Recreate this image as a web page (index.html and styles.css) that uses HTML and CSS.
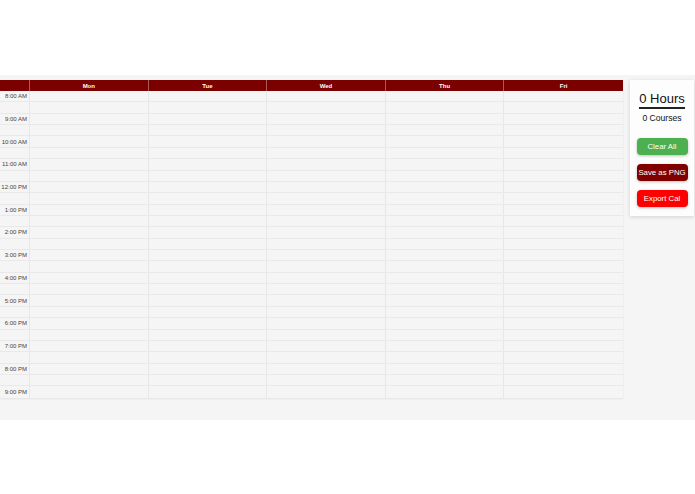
FILE: index.html
```html
<!DOCTYPE html>
<html>
<head>
<meta charset="utf-8">
<link rel="stylesheet" href="styles.css">
</head>
<body>
<div class="top"></div>
<main class="band">
  <section class="cal">
    <div class="row head">
      <div class="c t"></div><div class="c">Mon</div><div class="c">Tue</div><div class="c">Wed</div><div class="c">Thu</div><div class="c">Fri</div>
    </div>
    <div class="row"><div class="c t">8:00 AM</div><div class="c"></div><div class="c"></div><div class="c"></div><div class="c"></div><div class="c"></div></div>
    <div class="row"><div class="c t"></div><div class="c"></div><div class="c"></div><div class="c"></div><div class="c"></div><div class="c"></div></div>
    <div class="row"><div class="c t">9:00 AM</div><div class="c"></div><div class="c"></div><div class="c"></div><div class="c"></div><div class="c"></div></div>
    <div class="row"><div class="c t"></div><div class="c"></div><div class="c"></div><div class="c"></div><div class="c"></div><div class="c"></div></div>
    <div class="row"><div class="c t">10:00 AM</div><div class="c"></div><div class="c"></div><div class="c"></div><div class="c"></div><div class="c"></div></div>
    <div class="row"><div class="c t"></div><div class="c"></div><div class="c"></div><div class="c"></div><div class="c"></div><div class="c"></div></div>
    <div class="row"><div class="c t">11:00 AM</div><div class="c"></div><div class="c"></div><div class="c"></div><div class="c"></div><div class="c"></div></div>
    <div class="row"><div class="c t"></div><div class="c"></div><div class="c"></div><div class="c"></div><div class="c"></div><div class="c"></div></div>
    <div class="row"><div class="c t">12:00 PM</div><div class="c"></div><div class="c"></div><div class="c"></div><div class="c"></div><div class="c"></div></div>
    <div class="row"><div class="c t"></div><div class="c"></div><div class="c"></div><div class="c"></div><div class="c"></div><div class="c"></div></div>
    <div class="row"><div class="c t">1:00 PM</div><div class="c"></div><div class="c"></div><div class="c"></div><div class="c"></div><div class="c"></div></div>
    <div class="row"><div class="c t"></div><div class="c"></div><div class="c"></div><div class="c"></div><div class="c"></div><div class="c"></div></div>
    <div class="row"><div class="c t">2:00 PM</div><div class="c"></div><div class="c"></div><div class="c"></div><div class="c"></div><div class="c"></div></div>
    <div class="row"><div class="c t"></div><div class="c"></div><div class="c"></div><div class="c"></div><div class="c"></div><div class="c"></div></div>
    <div class="row"><div class="c t">3:00 PM</div><div class="c"></div><div class="c"></div><div class="c"></div><div class="c"></div><div class="c"></div></div>
    <div class="row"><div class="c t"></div><div class="c"></div><div class="c"></div><div class="c"></div><div class="c"></div><div class="c"></div></div>
    <div class="row"><div class="c t">4:00 PM</div><div class="c"></div><div class="c"></div><div class="c"></div><div class="c"></div><div class="c"></div></div>
    <div class="row"><div class="c t"></div><div class="c"></div><div class="c"></div><div class="c"></div><div class="c"></div><div class="c"></div></div>
    <div class="row"><div class="c t">5:00 PM</div><div class="c"></div><div class="c"></div><div class="c"></div><div class="c"></div><div class="c"></div></div>
    <div class="row"><div class="c t"></div><div class="c"></div><div class="c"></div><div class="c"></div><div class="c"></div><div class="c"></div></div>
    <div class="row"><div class="c t">6:00 PM</div><div class="c"></div><div class="c"></div><div class="c"></div><div class="c"></div><div class="c"></div></div>
    <div class="row"><div class="c t"></div><div class="c"></div><div class="c"></div><div class="c"></div><div class="c"></div><div class="c"></div></div>
    <div class="row"><div class="c t">7:00 PM</div><div class="c"></div><div class="c"></div><div class="c"></div><div class="c"></div><div class="c"></div></div>
    <div class="row"><div class="c t"></div><div class="c"></div><div class="c"></div><div class="c"></div><div class="c"></div><div class="c"></div></div>
    <div class="row"><div class="c t">8:00 PM</div><div class="c"></div><div class="c"></div><div class="c"></div><div class="c"></div><div class="c"></div></div>
    <div class="row"><div class="c t"></div><div class="c"></div><div class="c"></div><div class="c"></div><div class="c"></div><div class="c"></div></div>
    <div class="row last"><div class="c t">9:00 PM</div><div class="c"></div><div class="c"></div><div class="c"></div><div class="c"></div><div class="c"></div></div>
  </section>
  <aside class="panel">
    <div class="hours">0 Hours</div>
    <div class="courses">0 Courses</div>
    <button class="btn green">Clear All</button>
    <button class="btn maroon">Save as PNG</button>
    <button class="btn red">Export Cal</button>
  </aside>
</main>
</body>
</html>
```

FILE: styles.css
```css
html, body {
  margin: 0;
  padding: 0;
  background: #ffffff;
  font-family: "Liberation Sans", Arial, sans-serif;
}
.top {
  height: 75px;
}
.band {
  background: #f4f5f4;
  display: flex;
  align-items: flex-start;
  padding: 5px 1px 22px 0;
}
.cal {
  width: 623px;
  flex: none;
  display: flex;
  flex-direction: column;
  box-shadow: 0 1px 2px rgba(0,0,0,0.08);
}
.row {
  display: grid;
  grid-template-columns: 30px repeat(5, 1fr);
  height: 11.37px;
  border-bottom: 1px solid #e8e9e8;
  box-sizing: border-box;
}
.row.last {
  border-bottom: none;
}
.c {
  border-right: 1px solid #e6e7e6;
  font-size: 6px;
  color: #444;
  display: flex;
  align-items: center;
  justify-content: center;
}
.c:last-child {
  border-right: none;
}
.c.t {
  justify-content: flex-end;
  padding-right: 2px;
}
.row.head {
  height: 11px;
  background: #7b0000;
  border-bottom: none;
}
.row.head .c {
  color: #ffffff;
  font-weight: bold;
  font-size: 6px;
  border-right: 1px solid rgba(255,255,255,0.35);
}
.row.head .c:last-child {
  border-right: none;
}
.panel {
  margin-left: 7px;
  width: 64px;
  height: 136px;
  box-sizing: border-box;
  background: #fdfdfd;
  box-shadow: 0 1px 4px rgba(0,0,0,0.15);
  display: flex;
  flex-direction: column;
  align-items: center;
  padding-top: 11px;
}
.hours {
  font-size: 13px;
  color: #111;
  line-height: 15px;
  border-bottom: 2px solid #222;
  padding-bottom: 1px;
}
.courses {
  font-size: 8.6px;
  color: #111;
  margin-top: 4px;
  line-height: 10px;
}
.btn {
  width: 51px;
  height: 17px;
  border: none;
  border-radius: 4px;
  color: #ffffff;
  font-family: "Liberation Sans", Arial, sans-serif;
  font-size: 7.8px;
  padding: 0;
  box-shadow: 0 1px 3px rgba(0,0,0,0.25);
}
.green {
  background: #4caf50;
  margin-top: 15px;
}
.maroon {
  background: #800000;
  margin-top: 9px;
}
.red {
  background: #ff0000;
  margin-top: 9px;
}
```
